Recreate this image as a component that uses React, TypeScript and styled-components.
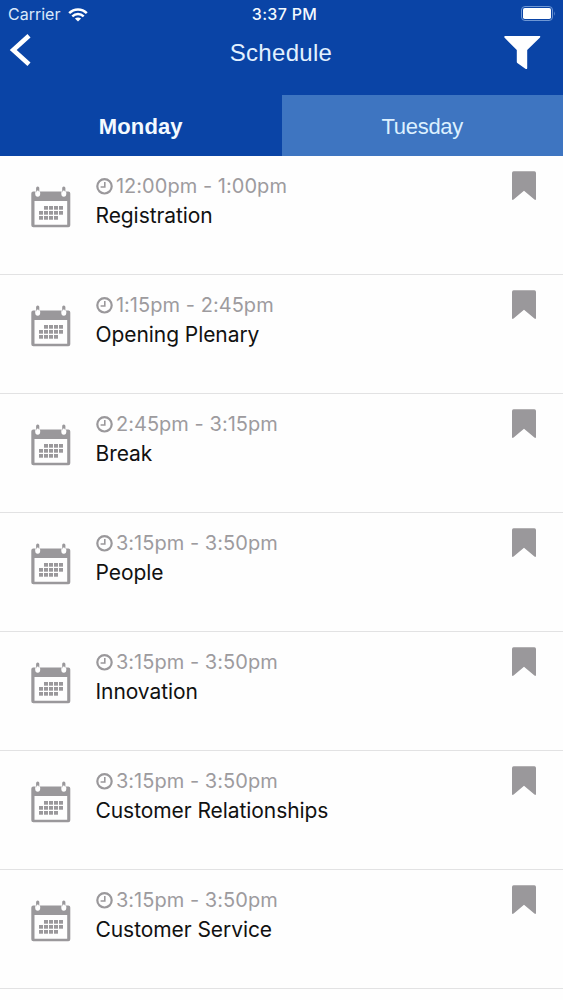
import React from "react";
import styled, { createGlobalStyle } from "styled-components";

const GlobalStyle = createGlobalStyle`
  * { box-sizing: border-box; }
  html, body { margin: 0; padding: 0; background: #fefefe; }
  body { overflow: hidden; }
  svg { display: block; flex: none; }
`;

const Screen = styled.div`
  width: 563px;
  height: 1000px;
  overflow: hidden;
  background: #fefefe;
  font-family: Inter, sans-serif;
`;

const Header = styled.header`
  height: 156px;
  background: #0a44a6;
  color: #f4faff;
`;

const StatusBar = styled.div`
  display: grid;
  grid-template-columns: 1fr auto 1fr;
  align-items: center;
  height: 29px;
  padding: 0 8px 0 8px;
  font-size: 16px;
  line-height: 29px;
`;

const Carrier = styled.div`
  display: flex;
  align-items: center;
  gap: 8px;
  color: #d9e9fb;
  letter-spacing: 0;
`;

const Clock = styled.div`
  font-weight: 500;
  letter-spacing: 0.3px;
  padding-left: 6px;
`;

const BatterySlot = styled.div`
  display: flex;
  justify-content: flex-end;
  padding-bottom: 2px;
`;

const NavBar = styled.div`
  display: grid;
  grid-template-columns: 1fr auto 1fr;
  height: 66px;
  padding: 0 22px 0 9px;
`;

const BackButton = styled.div`
  padding-top: 4px;
`;

const FilterButton = styled.div`
  display: flex;
  justify-content: flex-end;
  padding-top: 7px;
`;

const Title = styled.h1`
  margin: 0;
  padding-left: 12px;
  font-family: "Liberation Sans", sans-serif;
  font-size: 24px;
  font-weight: 400;
  line-height: 48px;
  letter-spacing: 0.3px;
  color: #e2f1ff;
`;

const Tabs = styled.nav`
  display: flex;
  height: 61px;
`;

const Tab = styled.div<{ $active?: boolean }>`
  flex: 1;
  text-align: center;
  font-family: "Liberation Sans", sans-serif;
  font-size: 22px;
  line-height: 64px;
  letter-spacing: ${(p) => (p.$active ? "0.15px" : "-0.3px")};
  font-weight: ${(p) => (p.$active ? 700 : 400)};
  color: ${(p) => (p.$active ? "#f4faff" : "#dcf0ff")};
  background: ${(p) => (p.$active ? "#0a44a6" : "#3e75c1")};
`;

const Row = styled.div`
  display: flex;
  align-items: flex-start;
  height: 119px;
  padding: 15px 27px 0 31px;
  border-bottom: 1px solid #e2e2e3;
`;

const CalendarSlot = styled.div`
  width: 64.5px;
  padding-top: 15px;
`;

const Details = styled.div`
  flex: 1;
`;

const Time = styled.div`
  display: flex;
  align-items: center;
  gap: 3.4px;
  height: 30px;
  font-size: 20px;
  line-height: 30px;
  letter-spacing: 0.04px;
  color: #9d9b9e;
  white-space: nowrap;
`;

const Name = styled.div`
  font-size: 21px;
  line-height: 30px;
  letter-spacing: -0.07px;
  color: #111;
  white-space: nowrap;
`;

const WifiIcon = () => (
  <svg width="20" height="14" viewBox="0 0 20 14" fill="none" stroke="#fff" strokeWidth="2.5">
    <path d="M1.2 5.2C6.2.2 13.8.2 18.8 5.2" />
    <path d="M4.3 8.4C7.6 5.3 12.4 5.3 15.7 8.4" />
    <path d="M10 13.6 6.9 10.6C8.7 9 11.3 9 13.1 10.6Z" fill="#fff" stroke="none" />
  </svg>
);

const BatteryIcon = () => (
  <svg width="34" height="15" viewBox="0 0 34 15">
    <rect x="0.5" y="0.5" width="31" height="14" rx="3.5" fill="none" stroke="#6f97d4" />
    <rect x="2" y="2" width="28" height="11" rx="1.8" fill="#fff" />
    <path d="M33 5.2Q34.2 7.5 33 9.8Z" fill="#7fa3da" />
  </svg>
);

const BackIcon = () => (
  <svg width="24" height="34" viewBox="0 0 24 34" fill="none" stroke="#fff" strokeWidth="4.6">
    <path d="M20 2.8 4.2 17 20 31.2" />
  </svg>
);

const FilterIcon = () => (
  <svg width="37" height="34" viewBox="0 0 37 34" fill="#fff">
    <path d="M1 0H35.6Q36.8 .4 36 1.5L23.2 14V32.2Q22.8 33.6 21.4 32.7L13.3 27Q12.8 26.6 12.8 26V14L.4 1.5Q0 .4 1 0Z" />
  </svg>
);

const dots = [
  [13, 20], [18, 20], [23, 20], [28, 20],
  [8, 25], [13, 25], [18, 25], [23, 25], [28, 25],
  [8, 30], [13, 30], [18, 30], [23, 30],
];

const CalendarIcon = () => (
  <svg width="40" height="42" viewBox="0 0 40 42" fill="#9a989b">
    <path
      fillRule="evenodd"
      d="M2.3 5.5H37.3Q39.3 5.5 39.3 7.5V39.3Q39.3 41.3 37.3 41.3H2.3Q.3 41.3 .3 39.3V7.5Q.3 5.5 2.3 5.5ZM3.5 15V38.7H36.2V15Z"
    />
    {[6.7, 32.8].map((x) => (
      <g key={x}>
        <ellipse cx={x} cy="7.5" rx="2.5" ry="3.2" fill="#fff" />
        <rect x={x - 1.6} y="0.5" width="3.2" height="6" rx="1.5" />
        <rect x={x - 1.2} y="4.5" width="2.4" height="5.4" rx="1.2" fill="#fff" />
      </g>
    ))}
    {dots.map(([x, y]) => (
      <rect key={`${x}-${y}`} x={x} y={y} width="4" height="3.7" />
    ))}
  </svg>
);

const ClockIcon = () => (
  <svg width="17" height="17" viewBox="0 0 17 17" fill="none" stroke="#9a989b">
    <circle cx="8.5" cy="8.3" r="7.2" strokeWidth="2.2" />
    <path d="M8.8 4V9H4.6" strokeWidth="1.6" />
  </svg>
);

const BookmarkIcon = () => (
  <svg width="24" height="30" viewBox="0 0 24 30" fill="#9a989b">
    <path d="M1.6 0.3H22.4Q24 0.3 24 1.9V28.2Q23.6 29.4 22.4 28.6L12 19.7 1.6 28.6Q.4 29.4 0 28.2V1.9Q0 0.3 1.6 0.3Z" />
  </svg>
);

const sessions = [
  { time: "12:00pm - 1:00pm", name: "Registration" },
  { time: "1:15pm - 2:45pm", name: "Opening Plenary" },
  { time: "2:45pm - 3:15pm", name: "Break" },
  { time: "3:15pm - 3:50pm", name: "People" },
  { time: "3:15pm - 3:50pm", name: "Innovation" },
  { time: "3:15pm - 3:50pm", name: "Customer Relationships" },
  { time: "3:15pm - 3:50pm", name: "Customer Service" },
];

export default function App() {
  return (
    <Screen>
      <GlobalStyle />
      <Header>
        <StatusBar>
          <Carrier>
            Carrier
            <WifiIcon />
          </Carrier>
          <Clock>3:37 PM</Clock>
          <BatterySlot>
            <BatteryIcon />
          </BatterySlot>
        </StatusBar>
        <NavBar>
          <BackButton>
            <BackIcon />
          </BackButton>
          <Title>Schedule</Title>
          <FilterButton>
            <FilterIcon />
          </FilterButton>
        </NavBar>
        <Tabs>
          <Tab $active>Monday</Tab>
          <Tab>Tuesday</Tab>
        </Tabs>
      </Header>
      <main>
        {sessions.map((s) => (
          <Row key={s.name}>
            <CalendarSlot>
              <CalendarIcon />
            </CalendarSlot>
            <Details>
              <Time>
                <ClockIcon />
                {s.time}
              </Time>
              <Name>{s.name}</Name>
            </Details>
            <BookmarkIcon />
          </Row>
        ))}
      </main>
    </Screen>
  );
}
